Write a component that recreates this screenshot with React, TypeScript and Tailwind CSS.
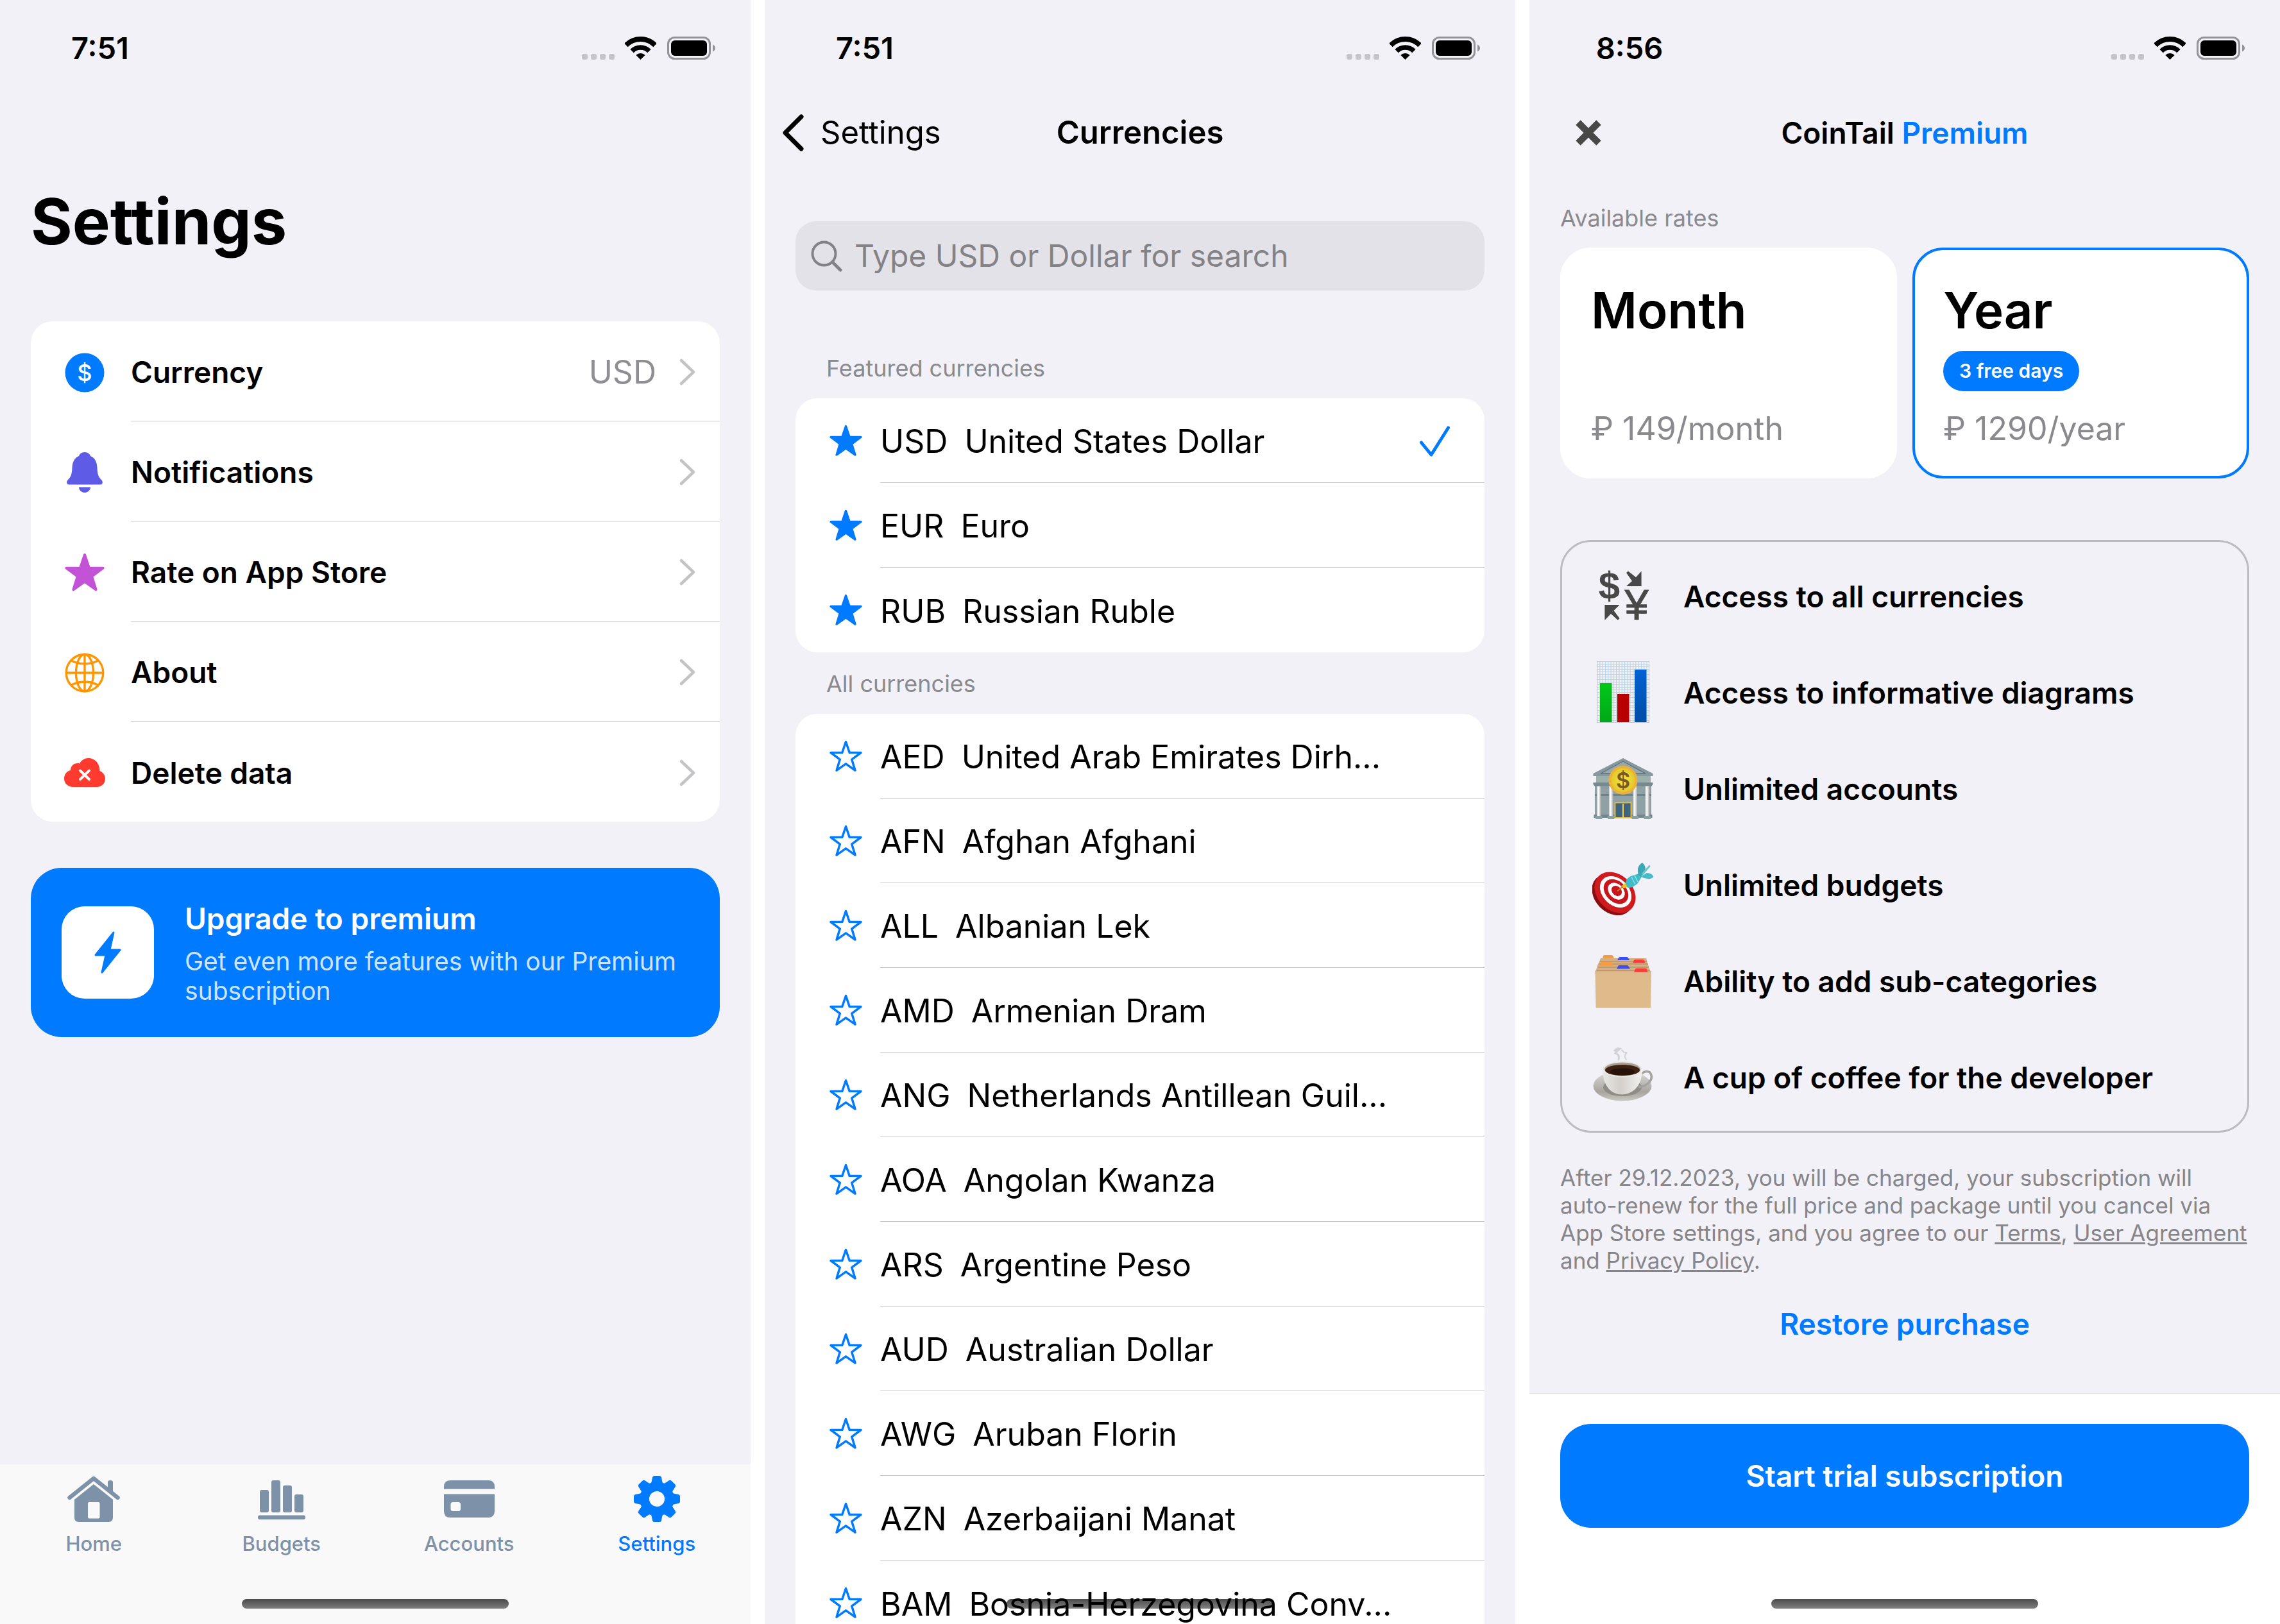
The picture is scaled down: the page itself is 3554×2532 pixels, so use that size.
import type { ReactNode } from "react";

const STAR =
  "M32 4 38.9 24.5 60.5 24.7 43.2 37.6 49.6 58.3 32 45.8 14.4 58.3 20.8 37.6 3.5 24.7 25.1 24.5Z";

/* ---------- shared chrome ---------- */

function StatusBar({ time }: { time: string }) {
  return (
    <div className="flex h-[150px] shrink-0 items-center justify-between pr-[55px] pl-[76px]">
      <span className="w-40 text-center text-[47px] leading-[60px] font-semibold">{time}</span>
      <div className="flex h-9 items-end">
        <div className="mr-4 flex gap-[5px]">
          {[0, 1, 2, 3].map((n) => (
            <span key={n} className="size-[9px] rounded-[3px] bg-[#c5c4c9]" />
          ))}
        </div>
        <svg className="mr-[17px] h-9 w-[49px]" viewBox="0 0 49 36" fill="none" stroke="#000">
          <path d="M1.9 13.4A32 32 0 0 1 47.1 13.4" strokeWidth="8" />
          <path d="M11.1 22.6A19 19 0 0 1 37.9 22.6" strokeWidth="7.5" />
          <path d="M24.5 36 17.4 28.9A10 10 0 0 1 31.6 28.9Z" fill="#000" stroke="none" />
        </svg>
        <svg className="h-9 w-[75px]" viewBox="0 0 75 36">
          <rect x="1.5" y="1.5" width="65" height="33" rx="10" fill="none" stroke="#949397" strokeWidth="3" />
          <rect x="6" y="6" width="56" height="24" rx="6" />
          <path d="M71 12.5C73.5 13.5 75 15.5 75 18S73.5 22.5 71 23.5Z" fill="#949397" />
        </svg>
      </div>
    </div>
  );
}

function HomeIndicator() {
  return (
    <div className="pointer-events-none absolute inset-x-0 bottom-6 flex justify-center">
      <div className="h-[15px] w-[416px] rounded-full bg-linear-to-b from-black/70 to-black/50" />
    </div>
  );
}

function Screen({ children }: { children: ReactNode }) {
  return (
    <section className="relative flex h-full min-w-0 flex-1 flex-col overflow-hidden bg-[#f2f1f7]">
      {children}
      <HomeIndicator />
    </section>
  );
}

/* ---------- settings ---------- */

const CoinIcon = () => (
  <svg className="size-16" viewBox="0 0 64 64">
    <circle cx="32" cy="32" r="30.5" fill="#007aff" />
    <text x="32" y="45" textAnchor="middle" fontFamily="Inter, sans-serif" fontSize="36" fontWeight="500" fill="#fff">
      $
    </text>
  </svg>
);

const BellIcon = () => (
  <svg className="h-[63px] w-14" viewBox="0 0 56 63" fill="#5e5ce6">
    <path d="M28 0C33 0 36 3 37 6C44 9 47 15 47.5 24C48 34 49 38 54 43C57 46 56.5 50.5 52 50.5H4C-.5 50.5-1 46 2 43C7 38 8 34 8.5 24C9 15 12 9 19 6C20 3 23 0 28 0Z" />
    <path d="M19 54.5H37C37 59 33 63 28 63S19 59 19 54.5Z" />
  </svg>
);

const RateIcon = () => (
  <svg className="size-16" viewBox="0 0 64 64">
    <path d={STAR} fill="#c353d6" stroke="#c353d6" strokeWidth="4" strokeLinejoin="round" />
  </svg>
);

const GlobeIcon = () => (
  <svg className="size-16" viewBox="0 0 64 64" fill="none" stroke="#ff9500" strokeWidth="3.4">
    <circle cx="32" cy="32" r="28.8" />
    <ellipse cx="32" cy="32" rx="13.5" ry="28.8" />
    <path d="M32 3V61M3 32H61M11 13Q32 23 53 13M11 51Q32 41 53 51" />
  </svg>
);

const CloudIcon = () => (
  <svg className="h-[45px] w-16" viewBox="0 0 64 45">
    <path
      d="M14 45C6 45 0 39.5 0 32C0 25 4.5 20 10 19C10 12 16 6.5 24 8.5C27 3 32 0 37.5 0C48 0 55.5 8 55.5 20C60.5 22 64 26.5 64 32C64 39.5 58.5 45 51 45Z"
      fill="#ff3b30"
    />
    <path d="M25 19.5 39 33M39 19.5 25 33" stroke="#fff" strokeWidth="4" strokeLinecap="round" />
  </svg>
);

const Chevron = () => (
  <svg className="h-[42px] w-[26px]" viewBox="0 0 26 42" fill="none">
    <path d="M3 3 22 21 3 39" stroke="#c4c4c7" strokeWidth="4.5" strokeLinecap="round" strokeLinejoin="round" />
  </svg>
);

const settings = [
  { label: "Currency", value: "USD", icon: <CoinIcon /> },
  { label: "Notifications", icon: <BellIcon /> },
  { label: "Rate on App Store", icon: <RateIcon /> },
  { label: "About", icon: <GlobeIcon /> },
  { label: "Delete data", icon: <CloudIcon /> },
];

const HomeIcon = () => (
  <svg className="h-[73px] w-[82px]" viewBox="0 0 82 73" fill="currentColor">
    <path d="M3.5 34 41 4 78.5 34" fill="none" stroke="currentColor" strokeWidth="6.5" strokeLinecap="round" strokeLinejoin="round" />
    <path d="M63 20V10Q63 7 67 7T71 10V27Z" />
    <path
      fillRule="evenodd"
      d="M41 13 71 37V65Q71 72 64 72H18Q11 72 11 65V37ZM34 41Q32 41 32 43V64.5Q32 66.5 34 66.5H48.5Q50.5 66.5 50.5 64.5V43Q50.5 41 48.5 41Z"
    />
  </svg>
);

const BudgetsIcon = () => (
  <svg className="mt-1 h-[62px] w-[74px]" viewBox="0 0 74 62" fill="currentColor">
    <rect x="3" y="15" width="14" height="35" rx="3" />
    <rect x="21" y="0" width="14" height="50" rx="3" />
    <rect x="39" y="8" width="14" height="42" rx="3" />
    <rect x="57" y="22" width="14" height="28" rx="3" />
    <rect x="0" y="54.5" width="74" height="6.5" rx="3" />
  </svg>
);

const AccountsIcon = () => (
  <svg className="h-[58px] w-[79px]" viewBox="0 0 79 58" fill="currentColor">
    <path d="M10 0H69Q79 0 79 10V13.5H0V10Q0 0 10 0Z" />
    <path
      fillRule="evenodd"
      d="M0 21.5H79V48Q79 58 69 58H10Q0 58 0 48ZM14 34Q10.5 34 10.5 37.5V44.5Q10.5 48 14 48H22.5Q26 48 26 44.5V37.5Q26 34 22.5 34Z"
    />
  </svg>
);

const GearIcon = () => (
  <svg className="size-[72px]" viewBox="0 0 72 72" fill="currentColor">
    {[0, 45, 90, 135, 180, 225, 270, 315].map((angle) => (
      <path key={angle} transform={`rotate(${angle} 36 36)`} d="M24 14 27.5 10 29 2.5Q29.5 0 32 0H40Q42.5 0 43 2.500L44.5 10 48 14Z" />
    ))}
    <path fillRule="evenodd" d="M36 9.5A26.5 26.5 0 1 1 36 62.5A26.5 26.5 0 1 1 36 9.5ZM36 24A12 12 0 1 0 36 48A12 12 0 1 0 36 24Z" />
  </svg>
);

const tabs = [
  { label: "Home", icon: <HomeIcon />, active: false },
  { label: "Budgets", icon: <BudgetsIcon />, active: false },
  { label: "Accounts", icon: <AccountsIcon />, active: false },
  { label: "Settings", icon: <GearIcon />, active: true },
];

function SettingsScreen() {
  return (
    <Screen>
      <StatusBar time="7:51" />
      <main className="flex flex-col px-12 pt-[145px]">
        <h1 className="text-[99px] leading-[100px] font-bold">Settings</h1>
        <ul className="mt-[106px] overflow-hidden rounded-[34px] bg-white">
          {settings.map((item) => (
            <li key={item.label} className="group">
              <button type="button" className="flex h-[156px] w-full items-center pt-[3px] pl-[52px] text-left">
                <span className="mr-10 flex w-16 justify-center">{item.icon}</span>
                <span className="flex h-full flex-1 items-center border-b border-[#c6c6c8] pr-[37px] group-last:border-b-0">
                  <span className="flex-1 text-[46px] leading-[60px] font-semibold">{item.label}</span>
                  {item.value && <span className="mr-9 text-[50px] leading-[60px] text-[#8e8e93]">{item.value}</span>}
                  <Chevron />
                </span>
              </button>
            </li>
          ))}
        </ul>
        <button type="button" className="mt-[72px] flex min-h-[264px] items-center rounded-[48px] bg-[#007aff] px-12 text-left">
          <span className="mr-12 flex size-36 shrink-0 items-center justify-center rounded-[36px] bg-white">
            <svg className="h-[66px] w-[42px]" viewBox="0 0 42 66">
              <path d="M30 2 2 37H18L12 64 40 29H24Z" fill="#007aff" stroke="#007aff" strokeWidth="3" strokeLinejoin="round" />
            </svg>
          </span>
          <span className="flex flex-col">
            <span className="text-[46px] leading-[60px] font-semibold text-white">Upgrade to premium</span>
            <span className="mt-[14px] text-[39px] leading-[46px] text-[#cce4ff]">
              Get even more features with our Premium subscription
            </span>
          </span>
        </button>
      </main>
      <nav className="mt-auto flex h-[249px] bg-[#f9f9f9] pt-4">
        {tabs.map((tab) => (
          <button
            key={tab.label}
            type="button"
            className={`flex flex-1 flex-col items-center ${tab.active ? "text-[#007aff]" : "text-[#7d92a9]"}`}
          >
            <span className="flex h-[76px] items-center">{tab.icon}</span>
            <span className="mt-[14px] text-[31px] leading-9 font-medium">{tab.label}</span>
          </button>
        ))}
      </nav>
    </Screen>
  );
}

/* ---------- currencies ---------- */

type Currency = { code: string; name: string; selected?: boolean };

const featured: Currency[] = [
  { code: "USD", name: "United States Dollar", selected: true },
  { code: "EUR", name: "Euro" },
  { code: "RUB", name: "Russian Ruble" },
];

const all: Currency[] = [
  { code: "AED", name: "United Arab Emirates Dirh..." },
  { code: "AFN", name: "Afghan Afghani" },
  { code: "ALL", name: "Albanian Lek" },
  { code: "AMD", name: "Armenian Dram" },
  { code: "ANG", name: "Netherlands Antillean Guil..." },
  { code: "AOA", name: "Angolan Kwanza" },
  { code: "ARS", name: "Argentine Peso" },
  { code: "AUD", name: "Australian Dollar" },
  { code: "AWG", name: "Aruban Florin" },
  { code: "AZN", name: "Azerbaijani Manat" },
  { code: "BAM", name: "Bosnia-Herzegovina Conv..." },
];

function CurrencyList({ title, items, starred }: { title: string; items: Currency[]; starred: boolean }) {
  return (
    <section className="flex flex-col">
      <h2 className="mb-[23px] px-12 text-[36px] leading-[48px] text-[#8a8a8e]">{title}</h2>
      <ul className="rounded-[34px] bg-white">
        {items.map((item) => (
          <li key={item.code} className="group flex h-[132px] items-center pl-[53px]">
            <button type="button" aria-label={`Favourite ${item.code}`} className="mr-7 shrink-0">
              <svg className="size-[51px]" viewBox="1 1 62 62">
                <path
                  d={STAR}
                  fill={starred ? "#007aff" : "none"}
                  stroke="#007aff"
                  strokeWidth={starred ? "4" : "4.2"}
                  strokeLinejoin="round"
                />
              </svg>
            </button>
            <button
              type="button"
              className="flex h-full min-w-0 flex-1 items-center gap-[26px] border-b border-[#c6c6c8] pt-[3px] pr-[54px] text-left text-[50px] leading-[60px] whitespace-nowrap group-last:border-b-0"
            >
              <span>{item.code}</span>
              <span className="flex-1">{item.name}</span>
              {item.selected && (
                <svg className="h-12 w-[47px]" viewBox="0 0 47 48" fill="none">
                  <path d="M2.5 26 18 45 44.5 3" stroke="#007aff" strokeWidth="5" strokeLinecap="round" strokeLinejoin="round" />
                </svg>
              )}
            </button>
          </li>
        ))}
      </ul>
    </section>
  );
}

function CurrenciesScreen() {
  return (
    <Screen>
      <StatusBar time="7:51" />
      <header className="grid h-[114px] shrink-0 grid-cols-[1fr_auto_1fr] items-center text-[49px] leading-[60px]">
        <button type="button" className="flex items-center gap-[26px] pl-[27px]">
          <svg className="h-[58px] w-[34px]" viewBox="0 0 34 58" fill="none">
            <path d="M30 4 5 29 30 54" stroke="#000" strokeWidth="7" strokeLinecap="round" strokeLinejoin="round" />
          </svg>
          Settings
        </button>
        <h1 className="font-semibold">Currencies</h1>
      </header>
      <main className="flex min-h-0 flex-1 flex-col px-12 pt-[81px]">
        <label className="flex h-[108px] shrink-0 items-center rounded-[32px] bg-[#e3e2e8] px-6">
          <svg className="mr-[19px] size-[49px]" viewBox="0 0 49 49" fill="none" stroke="#828187" strokeLinecap="round">
            <circle cx="20.5" cy="20.5" r="18" strokeWidth="4" />
            <path d="M34 34 46 46" strokeWidth="5" />
          </svg>
          <input
            type="text"
            aria-label="Search currencies"
            placeholder="Type USD or Dollar for search"
            className="min-w-0 flex-1 bg-transparent text-[48px] leading-[60px] outline-none placeholder:text-[#838287]"
          />
        </label>
        <div className="mt-[97px] flex flex-col gap-[25px]">
          <CurrencyList title="Featured currencies" items={featured} starred />
          <CurrencyList title="All currencies" items={all} starred={false} />
        </div>
      </main>
    </Screen>
  );
}

/* ---------- premium ---------- */

const ExchangeIcon = () => (
  <svg className="size-24 overflow-visible" viewBox="0 0 96 96" fill="#484848">
    <text x="26.5" y="53" textAnchor="middle" fontFamily="'Liberation Sans', Arial, sans-serif" fontSize="60" fontWeight="700">
      $
    </text>
    <path d="M56 9.5 68 19 76.6 9.5V33H53L62 25 53 12Z" />
    <text
      x="69"
      y="85"
      textAnchor="middle"
      fontFamily="'Liberation Sans', Arial, sans-serif"
      fontSize="66"
      stroke="#484848"
      strokeWidth="1.2"
    >
      ¥
    </text>
    <path d="M19.4 62H42.6L33.5 71 42.6 83 40 86 29 76 19.4 86Z" />
  </svg>
);

const ChartIcon = () => (
  <svg className="size-24" viewBox="0 0 96 96">
    <defs>
      <pattern id="chart-grid" x="7" y="0" width="4.3" height="4" patternUnits="userSpaceOnUse">
        <rect width="4.3" height="4" fill="#f0f2f4" />
        <path d="M0 .5H4.3M.5 0V4" stroke="#b3d4ee" strokeWidth="1.2" />
      </pattern>
      <linearGradient id="chart-green" x1="0" y1="0" x2="0" y2="1">
        <stop stopColor="#02c81a" />
        <stop offset="1" stopColor="#00a818" />
      </linearGradient>
      <linearGradient id="chart-blue" x1="0" y1="0" x2="0" y2="1">
        <stop stopColor="#0462d3" />
        <stop offset="1" stopColor="#004da6" />
      </linearGradient>
    </defs>
    <rect x="7" y="0" width="82" height="96" fill="url(#chart-grid)" />
    <rect x="7.5" y=".5" width="81" height="95" fill="none" stroke="#c3cad0" />
    <rect x="12" y="34" width="18.5" height="61" fill="url(#chart-green)" />
    <rect x="39" y="51" width="18.5" height="44" fill="#b80000" />
    <rect x="66" y="13" width="18.5" height="82" fill="url(#chart-blue)" />
  </svg>
);

const BankIcon = () => (
  <svg className="size-24" viewBox="0 0 96 96">
    <defs>
      <linearGradient id="bank-column">
        <stop stopColor="#c9c9cb" />
        <stop offset=".4" stopColor="#fff" />
        <stop offset="1" stopColor="#a9aaad" />
      </linearGradient>
      <radialGradient id="bank-coin">
        <stop stopColor="#f5e93a" />
        <stop offset="1" stopColor="#e3c92d" />
      </radialGradient>
    </defs>
    <rect x="4" y="42" width="88" height="50" fill="#8ea1a5" />
    <path d="M4 57H92V60H4Z" fill="#6f8489" />
    <path d="M48 1 94.5 25V29H1.5V25Z" fill="#86999e" />
    <path d="M48 6 83 25H13Z" fill="#96a9ac" stroke="#5f7378" strokeWidth="1.3" />
    <rect x="6" y="29" width="85" height="11" fill="#9db0ad" />
    <path d="M1.5 39H94.5V42L92 45H4L1.5 42Z" fill="#75898f" />
    <rect x="2.5" y="89" width="91" height="5" fill="#71868b" />
    {[7, 26, 63.5, 82.5].map((x) => (
      <g key={x}>
        <rect x={x} y="45" width="6.5" height="46" fill="url(#bank-column)" />
        <path d={`M${x - 2} 91H${x + 8.5}V96H${x - 2}Z`} fill="#8da1a5" />
      </g>
    ))}
    <rect x="35.5" y="70.5" width="25" height="23.5" fill="#3d6480" stroke="#f2bd2e" strokeWidth="1.8" />
    <path d="M48 72V94" stroke="#f7d23c" strokeWidth="2" />
    <circle cx="48" cy="35.3" r="22.5" fill="#edb038" />
    <circle cx="48" cy="35.3" r="18.5" fill="url(#bank-coin)" />
    <text x="48" y="47.5" textAnchor="middle" fontFamily="Inter, sans-serif" fontSize="34" fontWeight="600" fill="#7e5727">
      $
    </text>
  </svg>
);

const TargetIcon = () => (
  <svg className="size-24" viewBox="0 0 96 96">
    <ellipse cx="31.5" cy="64" rx="36" ry="27.5" transform="rotate(45 31.5 64)" fill="#8a0d12" />
    <ellipse cx="35.5" cy="60.5" rx="36" ry="27.5" transform="rotate(45 35.5 60.5)" fill="#cf1a1f" />
    <ellipse cx="36.5" cy="59.5" rx="28" ry="20.5" transform="rotate(45 36.5 59.5)" fill="#fff" />
    <ellipse cx="37" cy="59" rx="22" ry="16" transform="rotate(45 37 59)" fill="#c7151b" />
    <ellipse cx="37.5" cy="58.5" rx="15" ry="11" transform="rotate(45 37.5 58.5)" fill="#fff" />
    <ellipse cx="38" cy="58" rx="9" ry="7" transform="rotate(45 38 58)" fill="#c7151b" />
    <path d="M39.5 58 49 50" stroke="#b9881a" strokeWidth="1.8" strokeLinecap="round" />
    <path d="M46 50 54 44 57 51 49 54Z" fill="#f0c419" />
    <path d="M52 46Q52 39 60 35L73 31 77 36 71 46Q63 54 55 53Z" fill="#42bcc9" />
    <path d="M61 36 67 48M66 34 71 44" stroke="#8fe3ea" strokeWidth="1.5" />
    <path d="M72 33Q68 20 78 14Q86 20 81 31L75 36Z" fill="#3aa9b5" />
    <path d="M75 36 85 30Q93 30 95.5 36Q92 41 81 38Z" fill="#45bcc8" />
    <path d="M79 31 89 19.5" stroke="#6cc7cf" strokeWidth="3" strokeLinecap="round" />
  </svg>
);

const FolderIcon = () => (
  <svg className="size-24" viewBox="0 0 96 96">
    <path d="M13 13H84L86 20 88 26 90.5 33H92V37H4.5V33L6 31 8 24 11 18Z" fill="#d6b083" />
    <path d="M12 18H85M10 22H87M9 27H88M7 32H90" stroke="#b8946a" strokeWidth="1.5" />
    <path d="M16.5 13V10Q17 8 19 8H30Q32 8 32.5 10L34 13Z" fill="#fb9a3c" />
    <path d="M39 16 41 12.5Q41.5 11 43 11H54Q55.5 11 56 12.5L58 16Z" fill="#3d4ef5" />
    <path d="M63 20 65 16.5Q65.5 15 67 15H79Q80.5 15 81 16.5L82.5 20Z" fill="#fb3a3a" />
    <path d="M12 24.5 13.5 20.5Q14 19 16 19H28Q29.5 19 30.5 20.5L33 24.5Z" fill="#fb9a3c" />
    <path d="M38 29.5 40 25.5Q40.5 24 42 24H54.5Q56 24 56.5 25.5L59 29.5Z" fill="#3d4ef5" />
    <path d="M65 34.5 67 30Q67.5 28.7 69 28.7H83Q84.5 28.7 85 30L86.5 34.5Z" fill="#fb3a3a" />
    <path d="M4.500 35H92L91 89Q91 90.5 89.5 90.5H7Q5.5 90.5 5.5 89Z" fill="#dfba8b" />
  </svg>
);

const CoffeeIcon = () => (
  <svg className="size-24" viewBox="0 0 96 96">
    <defs>
      <linearGradient id="cup-body">
        <stop stopColor="#e9e7e3" />
        <stop offset=".45" stopColor="#d3d0cb" />
        <stop offset="1" stopColor="#f3f2f0" />
      </linearGradient>
      <linearGradient id="cup-saucer" x1="0" y1="0" x2="0" y2="1">
        <stop stopColor="#dedcd8" />
        <stop offset=".7" stopColor="#a8a59f" />
        <stop offset="1" stopColor="#c9c7c1" />
      </linearGradient>
    </defs>
    <ellipse cx="47" cy="62" rx="45.5" ry="23.5" fill="url(#cup-saucer)" />
    <ellipse cx="47" cy="64" rx="30" ry="14" fill="#8f8c86" />
    <path d="M76 44Q83 37 90 41Q96 50 87 58Q80 64 72 63" fill="none" stroke="#a3a29f" strokeWidth="3.5" />
    <path d="M16 36Q16 56 26 67Q34 75.5 46 75.5T67 67Q78 56 78 36Z" fill="url(#cup-body)" />
    <ellipse cx="47" cy="36" rx="31" ry="12.5" fill="#ebe9e5" />
    <ellipse cx="47" cy="36" rx="28" ry="10.5" fill="#a89f92" />
    <ellipse cx="47" cy="37.5" rx="27" ry="8.5" fill="#3d2113" />
    <ellipse cx="47" cy="40" rx="19" ry="5.5" fill="#27120a" />
    <g fill="none" stroke="#c4c4c9" strokeLinecap="round" opacity=".7">
      <path d="M35 7Q38 3 43 4Q38 8 36 11Q43 13 41 21" strokeWidth="3" />
      <path d="M46 6Q49 11 54 10Q48 15 53 21" strokeWidth="2" />
    </g>
  </svg>
);

const features = [
  { label: "Access to all currencies", icon: <ExchangeIcon /> },
  { label: "Access to informative diagrams", icon: <ChartIcon /> },
  { label: "Unlimited accounts", icon: <BankIcon /> },
  { label: "Unlimited budgets", icon: <TargetIcon /> },
  { label: "Ability to add sub-categories", icon: <FolderIcon /> },
  { label: "A cup of coffee for the developer", icon: <CoffeeIcon /> },
];

const plans = [
  { name: "Month", price: "₽ 149/month", badge: "", selected: false },
  { name: "Year", price: "₽ 1290/year", badge: "3 free days", selected: true },
];

function PremiumScreen() {
  return (
    <Screen>
      <StatusBar time="8:56" />
      <header className="grid h-[114px] shrink-0 grid-cols-[1fr_auto_1fr] items-center text-[46px] leading-[60px] font-semibold">
        <button type="button" aria-label="Close" className="ml-[71px] w-[42px]">
          <svg className="size-[42px]" viewBox="0 0 42 42">
            <path d="M5 5 37 37M37 5 5 37" stroke="#484848" strokeWidth="10.5" />
          </svg>
        </button>
        <h1>
          CoinTail <span className="text-[#007aff]">Premium</span>
        </h1>
      </header>
      <main className="flex flex-col px-12 pt-[52px]">
        <h2 className="text-[36px] leading-[48px] text-[#8a8a8e]">Available rates</h2>
        <div className="mt-[22px] grid grid-cols-2 gap-6">
          {plans.map((plan) => (
            <button
              key={plan.name}
              type="button"
              aria-pressed={plan.selected}
              className={`flex h-[360px] flex-col items-start rounded-[48px] border-4 bg-white px-11 pt-[52px] pb-11 text-left ${
                plan.selected ? "border-[#007aff]" : "border-white"
              }`}
            >
              <span className="text-[78px] leading-[84px] font-semibold">{plan.name}</span>
              {plan.badge && (
                <span className="mt-[21px] rounded-full bg-[#007aff] px-[25px] text-[30px] leading-[63px] font-semibold text-white">
                  {plan.badge}
                </span>
              )}
              <span className="mt-auto text-[50px] leading-[60px] text-[#8a8a8e]">{plan.price}</span>
            </button>
          ))}
        </div>
        <ul className="mt-24 flex flex-col rounded-[48px] border-[3px] border-[#bbbbc0] px-[47px] py-[9px]">
          {features.map((feature) => (
            <li key={feature.label} className="flex h-[150px] items-center gap-[46px]">
              {feature.icon}
              <span className="pt-[2px] text-[46px] leading-[60px] font-semibold">{feature.label}</span>
            </li>
          ))}
        </ul>
        <p className="mt-[49px] text-[35px] leading-[43px] text-[#868589]">
          After 29.12.2023, you will be charged, your subscription will auto-renew for the full price and package until you
          cancel via App Store settings, and you agree to our{" "}
          <a href="#terms" className="underline">Terms</a>,{" "}
          <a href="#agreement" className="underline">User Agreement</a> and{" "}
          <a href="#privacy" className="underline">Privacy Policy</a>.
        </p>
        <button type="button" className="mt-[47px] self-center text-[46px] leading-[60px] font-semibold text-[#007aff]">
          Restore purchase
        </button>
      </main>
      <footer className="mt-auto border-t border-[#e2e2e5] bg-white px-12 pt-[47px] pb-[150px]">
        <button type="button" className="h-[162px] w-full rounded-[48px] bg-[#007aff] text-[46px] leading-[60px] font-semibold text-white">
          Start trial subscription
        </button>
      </footer>
    </Screen>
  );
}

export default function App() {
  return (
    <div className="flex h-screen gap-[22px] bg-white font-[Inter,'Noto_Sans',sans-serif] text-black">
      <SettingsScreen />
      <CurrenciesScreen />
      <PremiumScreen />
    </div>
  );
}
